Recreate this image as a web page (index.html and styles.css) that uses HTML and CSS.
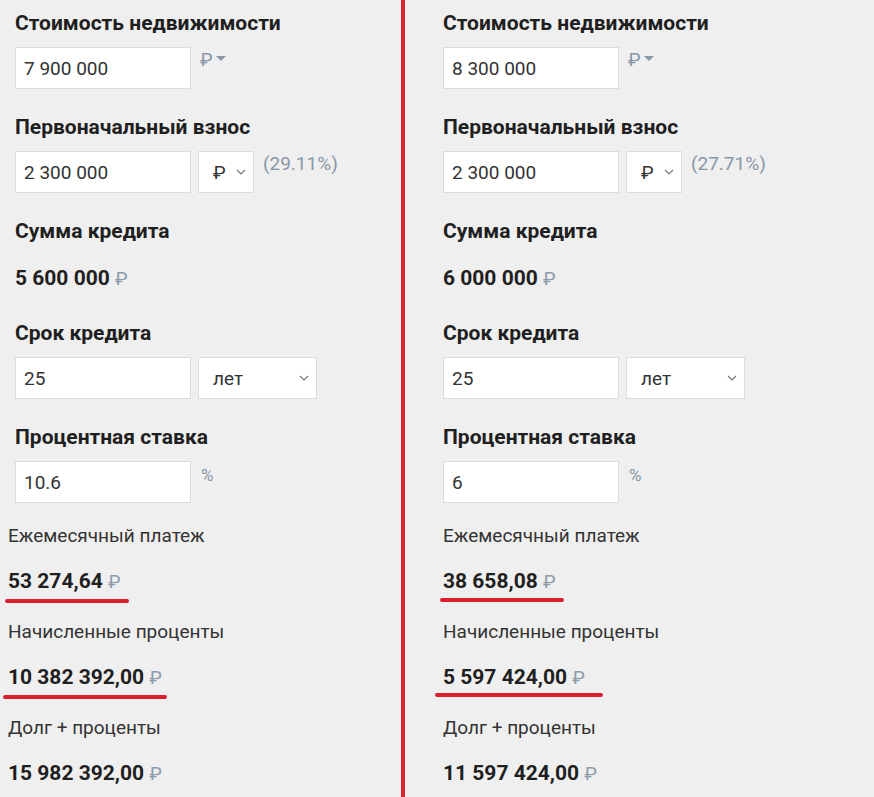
FILE: index.html
```html
<!DOCTYPE html>
<html lang="ru">
<head>
  <meta charset="UTF-8">
  <meta name="viewport" content="width=device-width, initial-scale=1.0">
  <title>Ипотечный калькулятор</title>
  <link rel="stylesheet" href="styles.css">
</head>
<body>
  <div class="panel panel-left">
    <div class="field">
      <div class="label">Стоимость недвижимости</div>
      <div class="row">
        <input class="input" type="text" value="7 900 000" readonly>
        <span class="unit">₽ <span class="caret"></span></span>
      </div>
    </div>
    <div class="field">
      <div class="label">Первоначальный взнос</div>
      <div class="row">
        <input class="input" type="text" value="2 300 000" readonly>
        <div class="select select-small">
          <span>₽</span>
          <svg width="10" height="6" viewBox="0 0 10 6"><polyline points="1,1 5,5 9,1" fill="none" stroke="#777" stroke-width="1.2"/></svg>
        </div>
        <span class="unit">(29.11%)</span>
      </div>
    </div>
    <div class="field field-sum">
      <div class="label">Сумма кредита</div>
      <div class="sum">5 600 000 <span class="rub">₽</span></div>
    </div>
    <div class="field">
      <div class="label">Срок кредита</div>
      <div class="row">
        <input class="input" type="text" value="25" readonly>
        <div class="select select-wide">
          <span>лет</span>
          <svg width="10" height="6" viewBox="0 0 10 6"><polyline points="1,1 5,5 9,1" fill="none" stroke="#777" stroke-width="1.2"/></svg>
        </div>
      </div>
    </div>
    <div class="field field-last">
      <div class="label">Процентная ставка</div>
      <div class="row">
        <input class="input" type="text" value="10.6" readonly>
        <span class="unit unit-pct">%</span>
      </div>
    </div>

    <div class="results">
      <div class="result">
        <div class="result-label">Ежемесячный платеж</div>
        <div class="result-value"><span class="mark mark-a">53 274,64 <span class="rub">₽</span></span></div>
      </div>
      <div class="result">
        <div class="result-label">Начисленные проценты</div>
        <div class="result-value"><span class="mark mark-b">10 382 392,00 <span class="rub">₽</span></span></div>
      </div>
      <div class="result">
        <div class="result-label">Долг + проценты</div>
        <div class="result-value">15 982 392,00 <span class="rub">₽</span></div>
      </div>
    </div>
  </div>

  <div class="panel panel-right">
    <div class="field">
      <div class="label">Стоимость недвижимости</div>
      <div class="row">
        <input class="input" type="text" value="8 300 000" readonly>
        <span class="unit">₽ <span class="caret"></span></span>
      </div>
    </div>
    <div class="field">
      <div class="label">Первоначальный взнос</div>
      <div class="row">
        <input class="input" type="text" value="2 300 000" readonly>
        <div class="select select-small">
          <span>₽</span>
          <svg width="10" height="6" viewBox="0 0 10 6"><polyline points="1,1 5,5 9,1" fill="none" stroke="#777" stroke-width="1.2"/></svg>
        </div>
        <span class="unit">(27.71%)</span>
      </div>
    </div>
    <div class="field field-sum">
      <div class="label">Сумма кредита</div>
      <div class="sum">6 000 000 <span class="rub">₽</span></div>
    </div>
    <div class="field">
      <div class="label">Срок кредита</div>
      <div class="row">
        <input class="input" type="text" value="25" readonly>
        <div class="select select-wide">
          <span>лет</span>
          <svg width="10" height="6" viewBox="0 0 10 6"><polyline points="1,1 5,5 9,1" fill="none" stroke="#777" stroke-width="1.2"/></svg>
        </div>
      </div>
    </div>
    <div class="field field-last">
      <div class="label">Процентная ставка</div>
      <div class="row">
        <input class="input" type="text" value="6" readonly>
        <span class="unit unit-pct">%</span>
      </div>
    </div>

    <div class="results">
      <div class="result">
        <div class="result-label">Ежемесячный платеж</div>
        <div class="result-value"><span class="mark mark-c">38 658,08 <span class="rub">₽</span></span></div>
      </div>
      <div class="result">
        <div class="result-label">Начисленные проценты</div>
        <div class="result-value"><span class="mark mark-d">5 597 424,00 <span class="rub">₽</span></span></div>
      </div>
      <div class="result">
        <div class="result-label">Долг + проценты</div>
        <div class="result-value">11 597 424,00 <span class="rub">₽</span></div>
      </div>
    </div>
  </div>
</body>
</html>
```

FILE: styles.css
```css
body {
  font-family: Roboto, "Liberation Sans", sans-serif;
  background-color: #efefef;
  color: #1f1f1f;
  margin: 0;
  padding: 0;
  display: flex;
  height: 797px;
  overflow: hidden;
}

.panel {
  box-sizing: border-box;
  padding-top: 11px;
}

.panel-left {
  width: 401px;
  padding-left: 15px;
}

.panel-right {
  flex: 1;
  border-left: 4px solid #d9232d;
  padding-left: 38px;
}

.field {
  margin-bottom: 26px;
}

.field-sum {
  margin-bottom: 21px;
}

.field-last {
  margin-bottom: 0;
}

.label {
  font-size: 21px;
  font-weight: 700;
  line-height: 24px;
  margin-bottom: 12px;
}

.row {
  display: flex;
  align-items: flex-start;
  gap: 7px;
}

.input {
  width: 176px;
  height: 42px;
  box-sizing: border-box;
  border: 1px solid #dcdcdc;
  background: #fff;
  padding: 0 8px;
  margin: 0;
  font-family: inherit;
  font-size: 19px;
  color: #333;
  outline: none;
}

.select {
  height: 42px;
  box-sizing: border-box;
  border: 1px solid #dcdcdc;
  background: #fff;
  display: flex;
  align-items: center;
  justify-content: space-between;
  padding: 0 7px 0 14px;
  font-size: 19px;
  color: #333;
}

.select-small {
  width: 56px;
}

.select-wide {
  width: 119px;
}

.unit {
  font-size: 19px;
  line-height: 20px;
  color: #8797a8;
  margin-left: 2px;
  padding-top: 3px;
  display: flex;
  align-items: center;
}

.unit-pct {
  font-size: 17px;
  margin-left: 3px;
  padding-top: 4px;
}

.caret {
  display: inline-block;
  width: 0;
  height: 0;
  margin-left: 3px;
  margin-top: -3px;
  border-left: 5px solid transparent;
  border-right: 5px solid transparent;
  border-top: 5px solid #8797a8;
}

.sum {
  font-size: 21px;
  font-weight: 700;
  line-height: 42px;
  padding-top: 2px;
}

.rub {
  font-weight: 400;
  color: #8d9cab;
  font-size: 19px;
}

.panel-left .results {
  margin-left: -7px;
}

.results {
  padding-top: 21px;
}

.result {
  margin-bottom: 26px;
}

.result-label {
  font-size: 19px;
  line-height: 24px;
  color: #333;
  margin-bottom: 21px;
}

.result-value {
  font-size: 21px;
  font-weight: 700;
  line-height: 24px;
}

.mark {
  position: relative;
  display: inline-block;
}

.mark::after {
  content: "";
  position: absolute;
  left: -3px;
  right: -8px;
  bottom: -9px;
  height: 4px;
  border-radius: 2px;
  background: #dc1f2c;
}

.mark-b::after {
  left: -5px;
  right: -5px;
}

.mark-d::after {
  left: -8px;
  right: -18px;
  bottom: -7px;
}

.mark-c::after {
  bottom: -8px;
}
```
